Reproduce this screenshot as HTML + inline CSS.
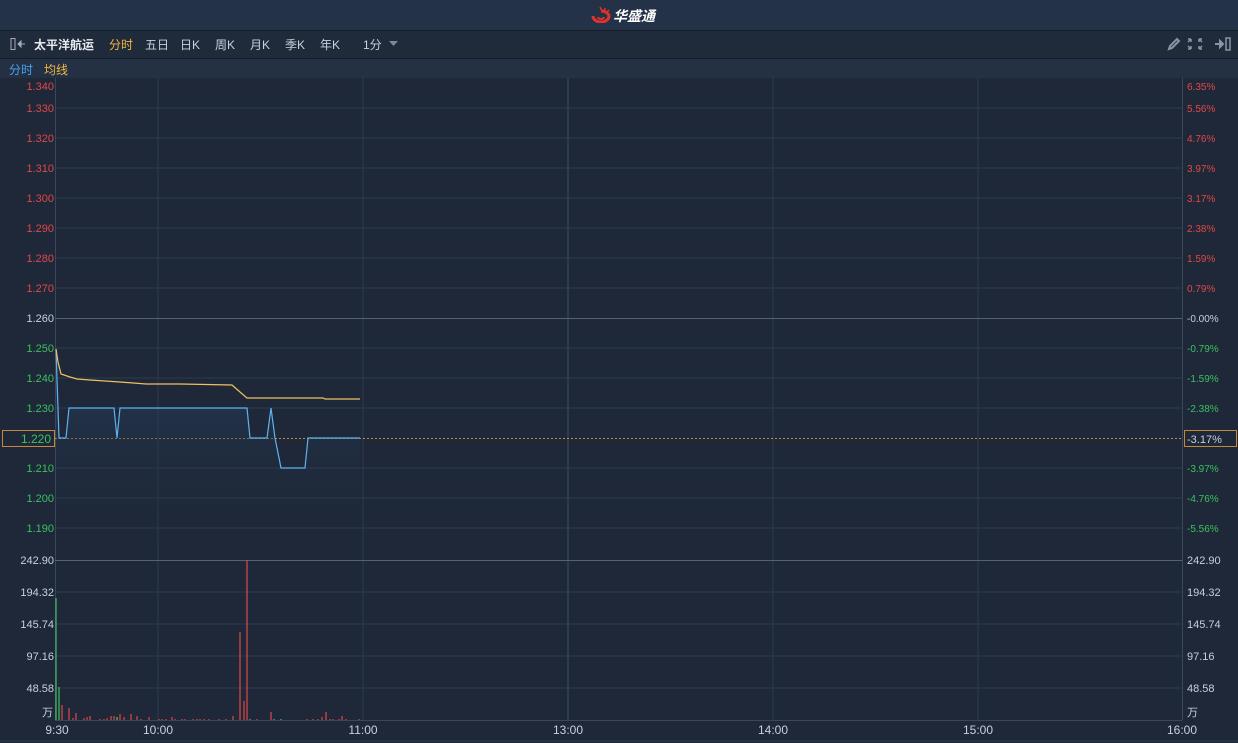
<!DOCTYPE html>
<html><head><meta charset="utf-8"><style>
body{margin:0;width:1238px;height:743px;background:#1e2838;font-family:"Liberation Sans","Noto Sans CJK SC",sans-serif;overflow:hidden;position:relative}
.top{position:absolute;left:0;top:0;width:1238px;height:30px;background:#243247;border-bottom:1px solid #151d29}
.tb{position:absolute;left:0;top:31px;width:1238px;height:27px;background:#1f2a3a;border-bottom:1px solid #151d29;font-size:12px;color:#c8d0dc}
.tb span{position:absolute;top:5px}
.lg{position:absolute;left:0;top:59px;width:1238px;height:19px;background:#243044;font-size:12px}
</style></head><body>
<div class="top">
<svg style="position:absolute;left:590px;top:7px" width="22" height="16" viewBox="0 0 22 16"><path d="M3 9a8 6 0 1 0 16 0a8 6 0 0 0-8-5" fill="none" stroke="#e0322a" stroke-width="3"/><path d="M8 10a3 2 0 1 0 6 0" fill="none" stroke="#e0322a" stroke-width="2"/><path d="M10 0l2 4M15 1l-1 4M19 3l-3 3" stroke="#e0322a" stroke-width="1.5"/></svg>
<span style="position:absolute;left:613px;top:6px;color:#fff;font-weight:bold;font-size:14px;font-style:italic">华盛通</span>
</div>
<div class="tb">
<svg style="position:absolute;left:10px;top:7px" width="16" height="12"><rect x="1" y="0.5" width="4" height="11" fill="none" stroke="#aab" /><path d="M8 6h7M8 6l3-3v6z" stroke="#aab" fill="#aab"/></svg>
<span style="left:34px;font-weight:bold;color:#e6e9ee">太平洋航运</span>
<span style="left:109px;color:#f0b840">分时</span>
<span style="left:145px">五日</span><span style="left:180px">日K</span><span style="left:215px">周K</span><span style="left:250px">月K</span><span style="left:285px">季K</span><span style="left:320px">年K</span><span style="left:363px">1分</span>
<svg style="position:absolute;left:389px;top:10px" width="9" height="6"><path d="M0 0h9L4.5 5z" fill="#7d8796"/></svg>
<svg style="position:absolute;left:1167px;top:6px" width="70" height="14" stroke="#8a94a3" fill="none" stroke-width="2"><path d="M2 12l1-3 7-7 2 2-7 7z"/><path d="M26 2h-3M26 2v3M26 2l-3 3M26 12h-3M26 12v-3M26 12l-3-3M34 2h3M34 2v3M34 2l3 3M34 12h3M34 12v-3M34 12l3-3" stroke-width="1.5" transform="translate(-2 0)"/><path d="M48 7h6" /><path d="M53 4l3 3-3 3z" fill="#8a94a3"/><rect x="59" y="1" width="4" height="12" stroke-width="1.5"/></svg>
</div>
<div class="lg"><span style="position:absolute;left:9px;top:2px;color:#4aa3e8">分时</span><span style="position:absolute;left:44px;top:2px;color:#f0b840">均线</span></div>
<svg style="position:absolute;left:0;top:78px" width="1238" height="665" viewBox="0 78 1238 665">
<g stroke="#2c3a4f" stroke-width="1">
<path d="M55 108H1182M55 138H1182M55 168H1182M55 198H1182M55 228H1182M55 258H1182M55 288H1182M55 348H1182M55 378H1182M55 408H1182M55 468H1182M55 498H1182M55 528H1182M55 592H1182M55 624H1182M55 656H1182M55 688H1182"/>
<path d="M158 78V720M363 78V720M773 78V720M978 78V720"/>
</g>
<path d="M568 78V720" stroke="#3f4d63"/>
<path d="M55.5 78V720M1182.5 78V720M55 720.5H1182" stroke="#3a475b"/>
<path d="M55 318.5H1182M55 560.5H1182" stroke="#55627a"/>
<path d="M0 741H1238" stroke="#2c3a4f"/>
<path d="M55 438.5H1182" stroke="#c9873a" stroke-dasharray="2 2"/>
<defs><linearGradient id="g" x1="0" y1="0" x2="0" y2="1"><stop offset="0" stop-color="#2b4a70" stop-opacity=".6"/><stop offset="1" stop-color="#1e2838" stop-opacity="0"/></linearGradient></defs>
<path d="M56 349L59 438L66 438L69 408L114 408L117 438L120 408L247 408L250 438L267 438L271 408L275 438L281 468L305 468L308 438L360 438L360 540L56 540Z" fill="url(#g)"/>
<path d="M56 349L59 438L66 438L69 408L114 408L117 438L120 408L247 408L250 438L267 438L271 408L275 438L281 468L305 468L308 438L360 438" fill="none" stroke="#5fb2f0" stroke-width="1.2"/>
<path d="M56 349L58 362L61 374L70 377L77 379L90 380L120 382L146 384L180 384L232 385L240 392L247 398L323 398L325 399L360 399" fill="none" stroke="#f0c060" stroke-width="1.2"/>
<g stroke="#e04848" stroke-width="1.2">
<path d="M62 720V705M69 720V708M73 720V718M76 720V713M84 720V718M87 720V717M90 720V716M100 720V719M104 720V719M107 720V718M111 720V716M114 720V716M117 720V717M120 720V714M124 720V717M131 720V714M137 720V716M141 720V719M149 720V717M159 720V719M162 720V719M166 720V719M172 720V717M175 720V719M182 720V719M185 720V719M193 720V719M197 720V719M200 720V719M204 720V719M209 720V719M219 720V719M226 720V719M233 720V716M240 720V632M244 720V701M247 720V560M257 720V719M271 720V712M307 720V719M313 720V719M318 720V719M322 720V717M326 720V712M330 720V719M333 720V719M339 720V719M342 720V716M346 720V719M359 720V719"/>
</g>
<g stroke="#40c060" stroke-width="1.2"><path d="M56 720V598M59 720V687M117 720V717M250 720V719M274 720V719M281 720V719"/></g>
<g font-size="11" fill="#e04848" text-anchor="end"><text x="54" y="90">1.340</text><text x="54" y="112">1.330</text><text x="54" y="142">1.320</text><text x="54" y="172">1.310</text><text x="54" y="202">1.300</text><text x="54" y="232">1.290</text><text x="54" y="262">1.280</text><text x="54" y="292">1.270</text></g>
<text x="54" y="322" font-size="11" fill="#c8d0dc" text-anchor="end">1.260</text>
<g font-size="11" fill="#3cc060" text-anchor="end"><text x="54" y="352">1.250</text><text x="54" y="382">1.240</text><text x="54" y="412">1.230</text><text x="54" y="472">1.210</text><text x="54" y="502">1.200</text><text x="54" y="532">1.190</text></g>
<rect x="2.5" y="430.5" width="52" height="16" fill="#1e2838" stroke="#c9873a"/>
<text x="51" y="443" font-size="12" fill="#3cc060" text-anchor="end">1.220</text>
<g font-size="10" fill="#e04848"><text x="1187" y="90">6.35%</text><text x="1187" y="112">5.56%</text><text x="1187" y="142">4.76%</text><text x="1187" y="172">3.97%</text><text x="1187" y="202">3.17%</text><text x="1187" y="232">2.38%</text><text x="1187" y="262">1.59%</text><text x="1187" y="292">0.79%</text></g>
<text x="1187" y="322" font-size="10" fill="#c8d0dc">-0.00%</text>
<g font-size="10" fill="#3cc060"><text x="1187" y="352">-0.79%</text><text x="1187" y="382">-1.59%</text><text x="1187" y="412">-2.38%</text><text x="1187" y="472">-3.97%</text><text x="1187" y="502">-4.76%</text><text x="1187" y="532">-5.56%</text></g>
<rect x="1184.5" y="430.5" width="52" height="16" fill="#1e2838" stroke="#c9873a"/>
<text x="1187" y="443" font-size="11" fill="#c8d0dc">-3.17%</text>
<g font-size="11" fill="#c8d0dc" text-anchor="end"><text x="54" y="564">242.90</text><text x="54" y="596">194.32</text><text x="54" y="628">145.74</text><text x="54" y="660">97.16</text><text x="54" y="692">48.58</text><text x="53" y="716">万</text></g>
<g font-size="11" fill="#c8d0dc"><text x="1187" y="564">242.90</text><text x="1187" y="596">194.32</text><text x="1187" y="628">145.74</text><text x="1187" y="660">97.16</text><text x="1187" y="692">48.58</text><text x="1187" y="716">万</text></g>
<g font-size="12" fill="#c8d0dc" text-anchor="middle"><text x="57" y="734">9:30</text><text x="158" y="734">10:00</text><text x="363" y="734">11:00</text><text x="568" y="734">13:00</text><text x="773" y="734">14:00</text><text x="978" y="734">15:00</text><text x="1182" y="734">16:00</text></g>
</svg>
</body></html>
